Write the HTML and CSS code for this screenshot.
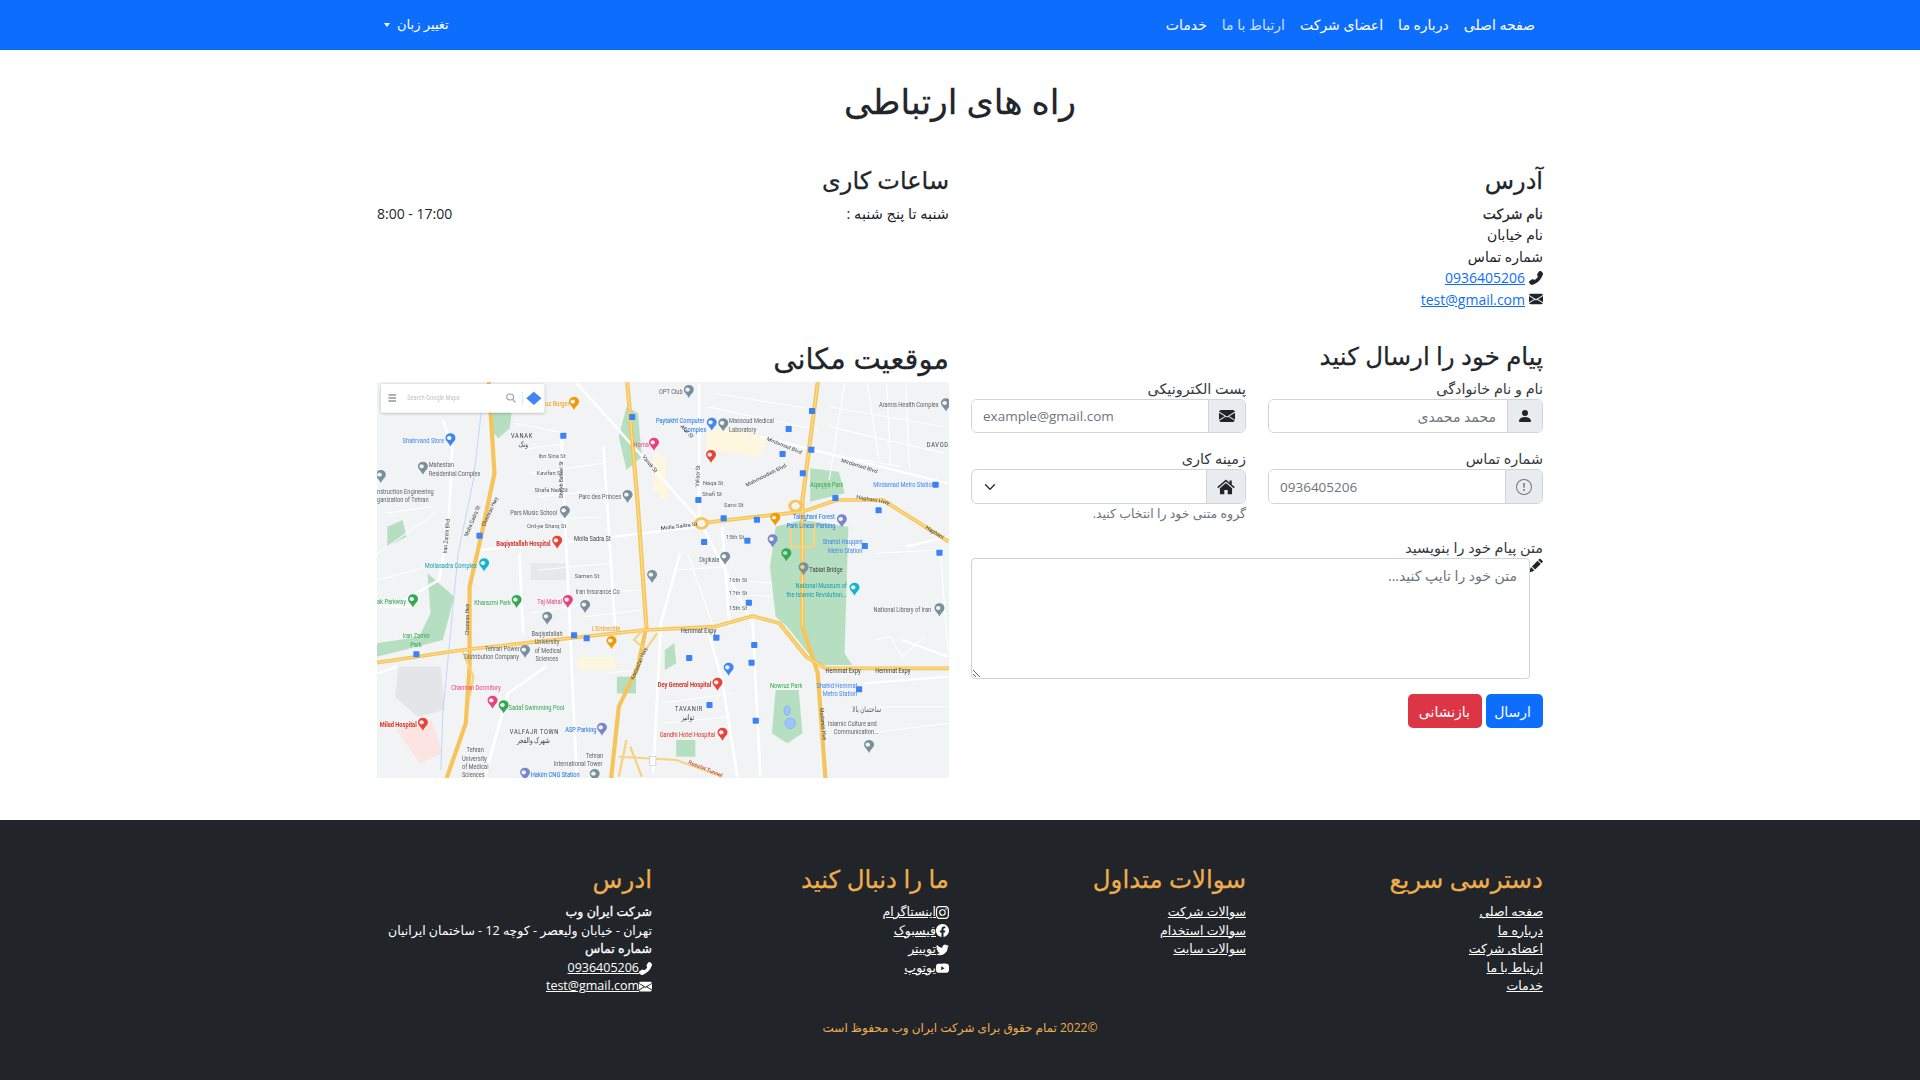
FILE: index.html
```html
<!DOCTYPE html>
<html lang="fa" dir="rtl">
<head>
    <meta charset="UTF-8">
    <title>راه های ارتباطی</title>
    <link rel="stylesheet" href="styles.css">
</head>
<body>
    <header class="topbar">
        <div class="container topbar-in">
            <nav class="nav-links">
                <a href="#">صفحه اصلی</a>
                <a href="#">درباره ما</a>
                <a href="#">اعضای شرکت</a>
                <a href="#" class="active">ارتباط با ما</a>
                <a href="#">خدمات</a>
            </nav>
            <a href="#" class="lang">تغییر زبان<span class="caret"></span></a>
        </div>
    </header>

    <main class="container">
        <h1 class="page-title">راه های ارتباطی</h1>

        <div class="two-cols info-row">
            <section>
                <h3>آدرس</h3>
                <p class="line"><b>نام شرکت</b></p>
                <p class="line">نام خیابان</p>
                <p class="line">شماره تماس</p>
                <p class="line">
                    <svg class="ic" viewBox="0 0 16 16"><path d="M1.885.511a1.745 1.745 0 0 1 2.61.163L6.29 2.98c.329.423.445.974.315 1.494l-.547 2.19a.678.678 0 0 0 .178.643l2.457 2.457a.678.678 0 0 0 .644.178l2.189-.547a1.745 1.745 0 0 1 1.494.315l2.306 1.794c.829.645.905 1.87.163 2.611l-1.034 1.034c-.74.74-1.846 1.065-2.877.702a18.634 18.634 0 0 1-7.01-4.42 18.634 18.634 0 0 1-4.42-7.009c-.362-1.03-.037-2.137.703-2.877L1.885.511z" transform="translate(16 0) scale(-1 1)"/></svg>
                    <a href="#" class="blue">0936405206</a>
                </p>
                <p class="line">
                    <svg class="ic" viewBox="0 0 16 16"><path d="M.05 3.555A2 2 0 0 1 2 2h12a2 2 0 0 1 1.95 1.555L8 8.414.05 3.555zM0 4.697v7.104l5.803-3.558L0 4.697zM6.761 8.83l-6.57 4.027A2 2 0 0 0 2 14h12a2 2 0 0 0 1.808-1.144l-6.57-4.027L8 9.586l-1.239-.757zm3.436-.586L16 11.801V4.697l-5.803 3.546z"/></svg>
                    <a href="#" class="blue">test@gmail.com</a>
                </p>
            </section>
            <section>
                <h3>ساعات کاری</h3>
                <div class="hours">
                    <span>شنبه تا پنج شنبه :</span>
                    <span dir="ltr">8:00 - 17:00</span>
                </div>
            </section>
        </div>

        <div class="two-cols contact-row">
            <section>
                <h3 class="form-title">پیام خود را ارسال کنید</h3>
                <form class="form-grid">
                    <div class="field">
                        <label>نام و نام خانوادگی</label>
                        <div class="input-group">
                            <span class="addon narrow"><svg class="ic-16" viewBox="0 0 16 16"><path d="M3 14s-1 0-1-1 1-4 6-4 6 3 6 4-1 1-1 1H3zm5-6a3 3 0 1 0 0-6 3 3 0 0 0 0 6z"/></svg></span>
                            <input type="text" placeholder="محمد محمدی">
                        </div>
                    </div>
                    <div class="field">
                        <label>پست الکترونیکی</label>
                        <div class="input-group">
                            <span class="addon"><svg class="ic-16" viewBox="0 0 16 16"><path d="M.05 3.555A2 2 0 0 1 2 2h12a2 2 0 0 1 1.95 1.555L8 8.414.05 3.555zM0 4.697v7.104l5.803-3.558L0 4.697zM6.761 8.83l-6.57 4.027A2 2 0 0 0 2 14h12a2 2 0 0 0 1.808-1.144l-6.57-4.027L8 9.586l-1.239-.757zm3.436-.586L16 11.801V4.697l-5.803 3.546z"/></svg></span>
                            <input type="text" dir="ltr" placeholder="example@gmail.com">
                        </div>
                    </div>
                    <div class="field">
                        <label>شماره تماس</label>
                        <div class="input-group tall">
                            <span class="addon"><svg class="ic-16 muted" viewBox="0 0 16 16"><path d="M8 15A7 7 0 1 1 8 1a7 7 0 0 1 0 14zm0 1A8 8 0 1 0 8 0a8 8 0 0 0 0 16z"/><path d="M7.002 11a1 1 0 1 1 2 0 1 1 0 0 1-2 0zM7.1 4.995a.905.905 0 1 1 1.8 0l-.35 3.507a.552.552 0 0 1-1.1 0L7.1 4.995z"/></svg></span>
                            <input type="text" dir="ltr" placeholder="0936405206">
                        </div>
                    </div>
                    <div class="field">
                        <label>زمینه کاری</label>
                        <div class="input-group tall">
                            <span class="addon wide"><svg class="ic-home" viewBox="0 0 16 16"><path d="M8 1.300.2 8l.9 1.100L8 3.200l6.900 5.900.9-1.100-2.700-2.300V2.200h-2v2L8 1.300z"/><path d="M8 4.500 2.600 9.100V14.500h3.900v-3.800h3v3.800h3.900V9.100L8 4.500z"/></svg></span>
                            <div class="select-box"><svg class="chev" viewBox="0 0 16 16"><path fill="none" stroke="#343a40" stroke-width="2" stroke-linecap="round" stroke-linejoin="round" d="m2 5 6 6 6-6"/></svg></div>
                        </div>
                        <small>گروه متنی خود را انتخاب کنید.</small>
                    </div>
                    <div class="field full">
                        <label class="msg-label">متن پیام خود را بنویسید</label>
                        <div class="message-wrap">
                            <svg class="pencil" viewBox="0 0 16 16"><path d="M12.854.146a.5.5 0 0 0-.707 0L10.500 1.793 14.207 5.500l1.647-1.646a.5.5 0 0 0 0-.708l-3-3zm.646 6.061L9.793 2.500 3.293 9H3.500a.5.5 0 0 1 .5.500v.500h.500a.5.500 0 0 1 .5.500v.500h.500a.5.500 0 0 1 .5.500v.500h.500a.5.500 0 0 1 .5.500v.207l6.500-6.500zm-7.468 7.468A.5.500 0 0 1 6 13.500V13h-.500a.5.500 0 0 1-.500-.500V12h-.500a.5.500 0 0 1-.500-.500V11h-.500a.5.500 0 0 1-.500-.500V10h-.500a.499.499 0 0 1-.175-.032l-.179.178a.5.500 0 0 0-.110.168l-2 5a.5.500 0 0 0 .650.650l5-2a.5.500 0 0 0 .168-.110l.178-.178z"/></svg>
                            <textarea placeholder="متن خود را تایپ کنید..."></textarea>
                        </div>
                    </div>
                    <div class="buttons full">
                        <button type="button" class="btn send">ارسال</button>
                        <button type="button" class="btn reset">بازنشانی</button>
                    </div>
                </form>
            </section>
            <section>
                <h3 class="map-title">موقعیت مکانی</h3>
                <svg class="map" viewBox="18 126 1495 1188" preserveAspectRatio="none">
                    <defs>
                        <path id="pin" d="M0-15a13 13 0 0 1 13 13C13 8 5 12 0 24-5 12-13 8-13-2A13 13 0 0 1 0-15zm0 9a6 6 0 1 0 0 10 6 6 0 0 0 0-10z"/>
                        <rect id="stop" x="-8" y="-9" width="16" height="18" rx="2"/>
                    </defs>
                    <rect x="18" y="126" width="1495" height="1188" fill="#f1f3f4"/>
                    <!-- parks -->
                    <g fill="#a8dab5" opacity=".8">
                        <path d="M1060 560 1130 540 1250 560 1240 940 1260 975 1170 975 1090 860 1060 830 1045 680z"/>
                        <path d="M1150 385l75 10 15 65-90 25z"/>
                        <path d="M1060 1050h60l10 130-40 30-40-30z"/>
                        <path d="M670 200l30 20 10 130-40 40-20-100z"/>
                        <path d="M320 215h50l-5 50-30 30-15-20z"/>
                        <path d="M45 560l40-20 10 50-50 30z"/>
                        <path d="M150 700l70 70-30 130-172 50v-40l110-20 30-70z"/>
                        <path d="M645 1010h50v50h-50z"/>
                        <path d="M800 1200h50v50h-50z"/>
                        <path d="M770 930l25-20 5 60-30 20z"/>
                    </g>
                    <path d="M75 980h110l10 130-70 20-60-60z" fill="#e3e5e8"/>
                    <path d="M420 670h95v50h-95z" fill="#e6e8ea"/>
                    <path d="M70 1170l90-30 30 100-60 30z" fill="#fbe4e1"/>
                    <path d="M880 270h90l70 30-20 50-140-20z" fill="#fef7e0"/>
                    <path d="M740 340l30 10 10 140-40-40z" fill="#fef7e0"/>
                    <path d="M540 950h100v40H540z" fill="#fef7e0"/>
                    <!-- minor streets -->
                    <g fill="none" stroke="#fff" stroke-width="3">
                        <path d="M380 250l130 30M390 330l120-20M420 400l190-30M440 470l170-20M440 540l170-10M440 690l190-20M420 820l150-30M530 760l190-10M800 690l130-10M940 720l110 10M930 760l120 10"/>
                        <path d="M880 200l290 70M900 160l270 50M1200 200l300 60M1200 260l300 80M1190 340l200 40M1240 130l-40 290M1300 130l30 230M1350 130l10 240M1400 130l10 260"/>
                        <path d="M560 830l150-20M620 1000l80-10M760 1090l190-30M760 1150l180-20M830 640l70 230M20 640l150-120M20 720l130-40M40 520l120-20"/>
                        <path d="M1320 640l170-10 20 300M1320 900l40-10 30 60 60-60M1300 1180l210-30M1290 1100l220 0"/>
                    </g>
                    <!-- white streets -->
                    <g fill="none" stroke="#fff" stroke-width="7">
                        <path d="M540 130 860 540 1000 850 1020 1310"/>
                        <path d="M860 130 860 540"/>
                        <path d="M610 320 640 860M500 300 540 1310"/>
                        <path d="M280 630 490 610 860 560"/>
                        <path d="M1020 290 1510 430"/>
                        <path d="M390 640 400 880M810 640 760 850 740 1300"/>
                        <path d="M190 240 215 320 205 560 180 720 60 800M920 560 940 860"/>
                        <path d="M1290 1030l220-20M1400 620l110-30M1390 900l120 50"/>
                        <path d="M300 1310 360 1060 460 980M880 860 920 1020 960 1310"/>
                        <path d="M18 800h90M20 1000l50-20"/>
                    </g>
                    <path d="M290 220 270 420 230 640 190 1120 185 1290" fill="none" stroke="#aecbfa" stroke-width="2"/>
                    <!-- highways -->
                    <g fill="none" stroke="#f6c45a" stroke-width="11" stroke-linejoin="round">
                        <path d="M18 968 240 930 540 892 720 870 900 860 1000 828 1070 850 1140 950 1190 985 1513 985"/>
                        <path d="M310 126 325 400 290 590 260 740 260 980 250 1150 200 1314"/>
                        <path d="M672 126 700 500 722 860 700 980 650 1100 630 1314"/>
                        <path d="M1170 126 1130 480 1130 860 1170 1000 1190 1314"/>
                        <path d="M860 550 1010 530 1130 515 1220 480 1340 480 1513 605"/>
                    </g>
                    <g fill="none" stroke="#f8d27f" stroke-width="6">
                        <path d="M720 860 690 900 720 930 750 880M1100 560v60h60v-70M650 1250l150 10 120 50M240 930l30 80-10 60M670 1200l-20 110M680 1220l30 90"/>
                    </g>
                    <g fill="none" stroke="#fde293" stroke-width="3">
                        <path d="M18 968 240 930 540 892 720 870 900 860 1000 828 1070 850 1140 950 1190 985 1513 985"/>
                        <path d="M860 550 1010 530 1130 515 1220 480 1340 480 1513 605"/>
                        <path d="M672 126 700 500 722 860"/>
                        <path d="M1170 126 1130 480 1130 860"/>
                    </g>
                    <circle cx="866" cy="550" r="15" fill="#f1f3f4" stroke="#f6c45a" stroke-width="8"/>
                    <circle cx="1112" cy="498" r="15" fill="#f1f3f4" stroke="#f6c45a" stroke-width="8"/>
                    <g fill="#a1c2fa" stroke="#7baaf7" stroke-width="2"><ellipse cx="1098" cy="1150" rx="14" ry="16"/><ellipse cx="1090" cy="1112" rx="8" ry="14"/></g>
                    <!-- search box -->
                    <rect class="map-search" x="28" y="132" width="428" height="86" rx="6" fill="#fff"/>
                    <path d="M48 165h20M48 174h20M48 183h20" stroke="#5f6368" stroke-width="3"/>
                    <circle cx="366" cy="171" r="9" fill="none" stroke="#9aa0a6" stroke-width="3"/>
                    <path d="M372 178l8 9" stroke="#9aa0a6" stroke-width="3"/>
                    <path d="M428 155l20 20-20 20-20-20z" fill="#4285f4"/>
                    <path d="M398 155v40" stroke="#dadce0" stroke-width="2"/>
                    <!-- pins -->
                    <g fill="#78909c">
                        <use href="#pin" x="833" y="150"/><use href="#pin" x="923" y="250"/><use href="#pin" x="28" y="405"/><use href="#pin" x="138" y="380"/><use href="#pin" x="673" y="465"/><use href="#pin" x="509" y="512"/><use href="#pin" x="928" y="650"/><use href="#pin" x="737" y="705"/><use href="#pin" x="562" y="795"/><use href="#pin" x="463" y="830"/><use href="#pin" x="405" y="930"/><use href="#pin" x="1133" y="682"/><use href="#pin" x="1488" y="805"/><use href="#pin" x="1304" y="1215"/><use href="#pin" x="587" y="1302"/><use href="#pin" x="1505" y="190"/>
                    </g>
                    <g fill="#ea4335">
                        <use href="#pin" x="489" y="602"/><use href="#pin" x="891" y="345"/><use href="#pin" x="908" y="1028"/><use href="#pin" x="921" y="1178"/><use href="#pin" x="138" y="1148"/>
                    </g>
                    <g fill="#ec407a"><use href="#pin" x="742" y="308"/><use href="#pin" x="517" y="780"/><use href="#pin" x="320" y="1082"/></g>
                    <g fill="#34a853"><use href="#pin" x="112" y="778"/><use href="#pin" x="383" y="780"/><use href="#pin" x="349" y="1096"/><use href="#pin" x="1088" y="640"/></g>
                    <g fill="#f29900"><use href="#pin" x="533" y="186"/><use href="#pin" x="631" y="903"/><use href="#pin" x="1059" y="533"/></g>
                    <g fill="#4285f4"><use href="#pin" x="210" y="295"/><use href="#pin" x="893" y="248"/><use href="#pin" x="937" y="983"/></g>
                    <g fill="#7986cb"><use href="#pin" x="1052" y="598"/><use href="#pin" x="1233" y="538"/><use href="#pin" x="606" y="1163"/><use href="#pin" x="405" y="1298"/></g>
                    <g fill="#12b5cb"><use href="#pin" x="298" y="670"/><use href="#pin" x="1266" y="743"/></g>
                    <!-- transit stops -->
                    <g fill="#3b82f6">
                        <use href="#stop" x="685" y="231"/><use href="#stop" x="505" y="287"/><use href="#stop" x="1155" y="213"/><use href="#stop" x="1094" y="267"/><use href="#stop" x="1153" y="329"/><use href="#stop" x="1078" y="342"/><use href="#stop" x="1131" y="400"/><use href="#stop" x="858" y="480"/><use href="#stop" x="924" y="535"/><use href="#stop" x="1011" y="539"/><use href="#stop" x="1216" y="474"/><use href="#stop" x="1329" y="511"/><use href="#stop" x="873" y="606"/><use href="#stop" x="986" y="602"/><use href="#stop" x="286" y="587"/><use href="#stop" x="1488" y="638"/><use href="#stop" x="990" y="788"/><use href="#stop" x="121" y="943"/><use href="#stop" x="533" y="886"/><use href="#stop" x="566" y="895"/><use href="#stop" x="905" y="893"/><use href="#stop" x="1004" y="915"/><use href="#stop" x="834" y="954"/><use href="#stop" x="997" y="968"/><use href="#stop" x="887" y="1095"/><use href="#stop" x="1008" y="1142"/><use href="#stop" x="1478" y="434"/><use href="#stop" x="1293" y="618"/><use href="#stop" x="1278" y="1048"/>
                    </g>
                    <rect x="730" y="1250" width="17" height="27" fill="#fff" stroke="#9aa0a6"/>
                    <!-- labels -->
                    <g class="map-labels">
                        <text x="97" y="181" fill="#bdc1c6">Search Google Maps</text>
                        <text x="458" y="199" fill="#f29900">uz Burger</text>
                        <text x="755" y="163" fill="#5f6368">OPT Club</text>
                        <text x="1330" y="200" fill="#5f6368">Aramis Health Complex</text>
                        <text x="85" y="308" fill="#4285f4">Shahrvand Store</text>
                        <text x="368" y="295" fill="#3c4043" class="ls">VANAK</text>
                        <text x="388" y="320" fill="#3c4043">ونک</text>
                        <text x="747" y="250" fill="#1a73e8">Paytakht Computer</text>
                        <text x="820" y="275" fill="#1a73e8">Complex</text>
                        <text x="938" y="250" fill="#5f6368">Massoud Medical</text>
                        <text x="938" y="275" fill="#5f6368">Laboratory</text>
                        <text x="1455" y="320" fill="#3c4043" class="ls">DAVOD</text>
                        <text x="153" y="381" fill="#5f6368">Mahestan</text>
                        <text x="153" y="407" fill="#5f6368">Residential Complex</text>
                        <text x="688" y="321" fill="#ec407a">Homa</text>
                        <text x="18" y="462" fill="#5f6368">nstruction Engineering</text>
                        <text x="18" y="487" fill="#5f6368">ganization of Tehran</text>
                        <text x="545" y="478" fill="#5f6368">Parc des Princes</text>
                        <text x="1150" y="441" fill="#34a853">Aqaqiya Park</text>
                        <text x="1315" y="440" fill="#4285f4">Mirdamad Metro Station</text>
                        <text x="366" y="525" fill="#5f6368">Pars Music School</text>
                        <text x="1105" y="538" fill="#1a73e8">Taleghani Forest</text>
                        <text x="1088" y="565" fill="#1a73e8">Park Linear Parking</text>
                        <text x="1183" y="612" fill="#4285f4">Shahid Haqqani</text>
                        <text x="1197" y="638" fill="#4285f4">Metro Station</text>
                        <text x="330" y="617" fill="#d93025" font-weight="bold">Baqiyatallah Hospital</text>
                        <text x="533" y="604" fill="#3c4043">Molla Sadra St</text>
                        <text x="860" y="665" fill="#5f6368">Digikala</text>
                        <text x="143" y="684" fill="#129eaf">Mollasadra Complex</text>
                        <text x="1148" y="695" fill="#3c4043">Tabiat Bridge</text>
                        <text x="1112" y="745" fill="#129eaf">National Museum of</text>
                        <text x="1088" y="771" fill="#129eaf">the Islamic Revolution...</text>
                        <text x="537" y="763" fill="#5f6368">Iran Insurance Co</text>
                        <text x="18" y="791" fill="#34a853">ak Parkway</text>
                        <text x="272" y="795" fill="#34a853">Kharazmi Park</text>
                        <text x="437" y="793" fill="#ec407a">Taj Mahal</text>
                        <text x="1316" y="817" fill="#5f6368">National Library of Iran</text>
                        <text x="580" y="873" fill="#f29900">L'Entrecôte</text>
                        <text x="812" y="878" fill="#3c4043">Hemmat Expy</text>
                        <text x="422" y="888" fill="#5f6368">Baqiyatallah</text>
                        <text x="430" y="913" fill="#5f6368">University</text>
                        <text x="430" y="938" fill="#5f6368">of Medical</text>
                        <text x="432" y="963" fill="#5f6368">Sciences</text>
                        <text x="85" y="895" fill="#34a853">Iran Zamin</text>
                        <text x="105" y="920" fill="#34a853">Park</text>
                        <text x="300" y="932" fill="#5f6368">Tehran Power</text>
                        <text x="246" y="956" fill="#5f6368">Distribution Company</text>
                        <text x="1190" y="998" fill="#3c4043">Hemmat Expy</text>
                        <text x="1320" y="998" fill="#3c4043">Hemmat Expy</text>
                        <text x="752" y="1040" fill="#d93025" font-weight="bold">Dey General Hospital</text>
                        <text x="212" y="1051" fill="#ec407a">Chamran Dormitory</text>
                        <text x="1045" y="1043" fill="#34a853">Nowruz Park</text>
                        <text x="1167" y="1044" fill="#4285f4">Shahid Hemmat</text>
                        <text x="1183" y="1067" fill="#4285f4">Metro Station</text>
                        <text x="362" y="1110" fill="#34a853">Sadaf Swimming Pool</text>
                        <text x="797" y="1113" fill="#3c4043" class="ls">TAVANIR</text>
                        <text x="815" y="1140" fill="#3c4043">توانیر</text>
                        <text x="25" y="1162" fill="#d93025" font-weight="bold">Milad Hospital</text>
                        <text x="1197" y="1157" fill="#5f6368">Islamic Culture and</text>
                        <text x="1212" y="1183" fill="#5f6368">Communication...</text>
                        <text x="1260" y="1115" fill="#5f6368">ساختمان بالا</text>
                        <text x="365" y="1183" fill="#3c4043" class="ls">VALFAJR TOWN</text>
                        <text x="385" y="1210" fill="#3c4043">شهرک والفجر</text>
                        <text x="510" y="1177" fill="#1a73e8">ASP Parking</text>
                        <text x="757" y="1192" fill="#d93025">Gandhi Hotel Hospital</text>
                        <text x="252" y="1237" fill="#5f6368">Tehran</text>
                        <text x="240" y="1262" fill="#5f6368">University</text>
                        <text x="240" y="1287" fill="#5f6368">of Medical</text>
                        <text x="240" y="1312" fill="#5f6368">Sciences</text>
                        <text x="564" y="1254" fill="#5f6368">Tehran</text>
                        <text x="480" y="1279" fill="#5f6368">International Tower</text>
                        <text x="420" y="1312" fill="#1a73e8">Hakim CNG Station</text>
                        <g class="small">
                            <text transform="translate(255 590) rotate(-70)" fill="#3c4043">Molla Sadra St</text>
                            <text transform="translate(300 560) rotate(-68)" fill="#3c4043">Chamran Hwy</text>
                            <text transform="translate(200 640) rotate(-85)" fill="#3c4043">Iran Zamin Blvd</text>
                            <text transform="translate(258 885) rotate(-90)" fill="#3c4043">Chamran Hwy</text>
                            <text transform="translate(505 475) rotate(-90)" fill="#3c4043">Sheikh Bahaei St</text>
                            <text transform="translate(860 440) rotate(-88)" fill="#3c4043">Valiasr St</text>
                            <text transform="translate(1035 300) rotate(25)" fill="#3c4043">Mirdamad Blvd</text>
                            <text transform="translate(1230 365) rotate(20)" fill="#3c4043">Mirdamad Blvd</text>
                            <text transform="translate(985 440) rotate(-30)" fill="#3c4043">Mahmoodieh Blvd</text>
                            <text transform="translate(1270 475) rotate(12)" fill="#3c4043">Haghani Hwy</text>
                            <text transform="translate(1450 565) rotate(35)" fill="#3c4043">Haghani</text>
                            <text transform="translate(760 570) rotate(-8)" fill="#3c4043">Molla Sadra St</text>
                            <text transform="translate(690 1020) rotate(-70)" fill="#3c4043">Kordestan Hwy</text>
                            <text transform="translate(1175 1105) rotate(85)" fill="#3c4043">Modarres Hwy</text>
                            <text transform="translate(830 1270) rotate(25)" fill="#b3261e">Resalat Tunnel</text>
                            <text transform="translate(810 260) rotate(50)" fill="#3c4043">Arar St</text>
                            <text transform="translate(710 350) rotate(55)" fill="#3c4043">Vanak St</text>
                            <text x="440" y="355" fill="#5f6368">Ibn Sina St</text>
                            <text x="435" y="405" fill="#5f6368">Kavifan St</text>
                            <text x="430" y="455" fill="#5f6368">Shafa Nea St</text>
                            <text x="410" y="565" fill="#5f6368">Ord-ye Sharq St</text>
                            <text x="535" y="715" fill="#5f6368">Saman St</text>
                            <text x="930" y="597" fill="#5f6368">15th St</text>
                            <text x="938" y="725" fill="#5f6368">16th St</text>
                            <text x="938" y="765" fill="#5f6368">17th St</text>
                            <text x="938" y="810" fill="#5f6368">15th St</text>
                            <text x="870" y="435" fill="#5f6368">Naqa St</text>
                            <text x="868" y="468" fill="#5f6368">Shafi St</text>
                            <text x="925" y="500" fill="#5f6368">Sarvi St</text>
                        </g>
                    </g>
                </svg>
            </section>
        </div>
    </main>

    <footer class="site-footer">
        <div class="container">
            <div class="foot-cols">
                <div class="foot-col">
                    <h4>دسترسی سریع</h4>
                    <a href="#">صفحه اصلی</a>
                    <a href="#">درباره ما</a>
                    <a href="#">اعضای شرکت</a>
                    <a href="#">ارتباط با ما</a>
                    <a href="#">خدمات</a>
                </div>
                <div class="foot-col">
                    <h4>سوالات متداول</h4>
                    <a href="#">سوالات شرکت</a>
                    <a href="#">سوالات استخدام</a>
                    <a href="#">سوالات سایت</a>
                </div>
                <div class="foot-col">
                    <h4>ما را دنبال کنید</h4>
                    <div class="social"><svg class="ic-foot" viewBox="0 0 16 16"><path d="M8 0C5.829 0 5.556.01 4.703.048 3.850.088 3.269.222 2.760.420a3.917 3.917 0 0 0-1.417.923A3.927 3.927 0 0 0 .420 2.760C.222 3.268.087 3.850.048 4.700.010 5.555 0 5.827 0 8.001c0 2.172.010 2.444.048 3.297.040.852.174 1.433.372 1.942.205.526.478.972.923 1.417.444.445.890.719 1.416.923.510.198 1.090.333 1.942.372C5.555 15.990 5.827 16 8 16s2.444-.010 3.298-.048c.851-.040 1.434-.174 1.943-.372a3.916 3.916 0 0 0 1.416-.923c.445-.445.718-.891.923-1.417.197-.509.332-1.090.372-1.942C15.990 10.445 16 10.173 16 8s-.010-2.445-.048-3.299c-.040-.851-.175-1.433-.372-1.941a3.926 3.926 0 0 0-.923-1.417A3.911 3.911 0 0 0 13.240.420c-.510-.198-1.092-.333-1.943-.372C10.443.010 10.172 0 7.998 0H8zm-.717 1.442h.718c2.136 0 2.389.007 3.232.046.780.035 1.204.166 1.486.275.373.145.640.319.920.599.280.280.453.546.598.920.110.281.240.705.275 1.485.039.843.047 1.096.047 3.231s-.008 2.389-.047 3.232c-.035.780-.166 1.203-.275 1.485a2.470 2.470 0 0 1-.599.919c-.280.280-.546.453-.920.598-.280.110-.704.240-1.485.276-.843.038-1.096.047-3.232.047s-2.390-.009-3.233-.047c-.780-.036-1.203-.166-1.485-.276a2.478 2.478 0 0 1-.920-.598 2.480 2.480 0 0 1-.600-.920c-.109-.281-.240-.705-.275-1.485-.038-.843-.046-1.096-.046-3.233 0-2.136.008-2.388.046-3.231.036-.780.166-1.204.276-1.486.145-.373.319-.640.599-.920.280-.280.546-.453.920-.598.282-.110.705-.240 1.485-.276.738-.034 1.024-.044 2.515-.045v.002zm4.988 1.328a.960.960 0 1 0 0 1.920.960.960 0 0 0 0-1.920zm-4.270 1.122a4.109 4.109 0 1 0 0 8.217 4.109 4.109 0 0 0 0-8.217zm0 1.441a2.667 2.667 0 1 1 0 5.334 2.667 2.667 0 0 1 0-5.334z"/></svg><a href="#">اینستاگرام</a></div>
                    <div class="social"><svg class="ic-foot" viewBox="0 0 16 16"><path d="M16 8.049c0-4.446-3.582-8.050-8-8.050C3.580 0-.002 3.603-.002 8.050c0 4.017 2.926 7.347 6.750 7.951v-5.625h-2.030V8.050H6.750V6.275c0-2.017 1.195-3.131 3.022-3.131.876 0 1.791.157 1.791.157v1.980h-1.009c-.993 0-1.303.621-1.303 1.258v1.510h2.218l-.354 2.326H9.250V16c3.824-.604 6.750-3.934 6.750-7.951z"/></svg><a href="#">فیسبوک</a></div>
                    <div class="social"><svg class="ic-foot" viewBox="0 0 16 16"><path d="M5.026 15c6.038 0 9.341-5.003 9.341-9.334 0-.140 0-.282-.006-.422A6.685 6.685 0 0 0 16 3.542a6.658 6.658 0 0 1-1.889.518 3.301 3.301 0 0 0 1.447-1.817 6.533 6.533 0 0 1-2.087.793A3.286 3.286 0 0 0 7.875 6.030a9.325 9.325 0 0 1-6.767-3.429 3.289 3.289 0 0 0 1.018 4.382A3.323 3.323 0 0 1 .640 6.575v.045a3.288 3.288 0 0 0 2.632 3.218 3.203 3.203 0 0 1-.865.115 3.230 3.230 0 0 1-.614-.057 3.283 3.283 0 0 0 3.067 2.277A6.588 6.588 0 0 1 .780 13.580a6.320 6.320 0 0 1-.780-.045A9.344 9.344 0 0 0 5.026 15z"/></svg><a href="#">توییتر</a></div>
                    <div class="social"><svg class="ic-foot" viewBox="0 0 16 16"><path d="M8.051 1.999h.089c.822.003 4.987.033 6.110.335a2.010 2.010 0 0 1 1.415 1.420c.101.380.172.883.220 1.402l.010.104.022.260.008.104c.065.914.073 1.770.074 1.957v.075c-.001.194-.010 1.108-.082 2.060l-.008.105-.009.104c-.050.572-.124 1.140-.235 1.558a2.007 2.007 0 0 1-1.415 1.420c-1.160.312-5.569.334-6.180.335h-.142c-.309 0-1.587-.006-2.927-.052l-.170-.006-.087-.004-.171-.007-.171-.007c-1.110-.049-2.167-.128-2.654-.260a2.007 2.007 0 0 1-1.415-1.419c-.111-.417-.185-.986-.235-1.558L.090 9.820l-.008-.104A31.400 31.400 0 0 1 0 7.680v-.123c.002-.215.010-.958.064-1.778l.007-.103.003-.052.008-.104.022-.260.010-.104c.048-.519.119-1.023.220-1.402a2.007 2.007 0 0 1 1.415-1.420c.487-.130 1.544-.210 2.654-.260l.170-.007.172-.006.086-.003.171-.007A99.788 99.788 0 0 1 7.858 2h.193zM6.400 5.209v4.818l4.157-2.408L6.400 5.209z"/></svg><a href="#">یوتوپ</a></div>
                </div>
                <div class="foot-col">
                    <h4>ادرس</h4>
                    <b>شرکت ایران وب</b>
                    <span>تهران - خیابان ولیعصر - کوچه 12 - ساختمان ایرانیان</span>
                    <b>شماره تماس</b>
                    <div class="social"><svg class="ic-foot" viewBox="0 0 16 16"><path d="M1.885.511a1.745 1.745 0 0 1 2.610.163L6.290 2.980c.329.423.445.974.315 1.494l-.547 2.190a.678.678 0 0 0 .178.643l2.457 2.457a.678.678 0 0 0 .644.178l2.189-.547a1.745 1.745 0 0 1 1.494.315l2.306 1.794c.829.645.905 1.870.163 2.611l-1.034 1.034c-.740.740-1.846 1.065-2.877.702a18.634 18.634 0 0 1-7.010-4.420 18.634 18.634 0 0 1-4.420-7.009c-.362-1.030-.037-2.137.703-2.877L1.885.511z" transform="translate(16 0) scale(-1 1)"/></svg><a href="#">0936405206</a></div>
                    <div class="social"><svg class="ic-foot" viewBox="0 0 16 16"><path d="M.05 3.555A2 2 0 0 1 2 2h12a2 2 0 0 1 1.950 1.555L8 8.414.050 3.555zM0 4.697v7.104l5.803-3.558L0 4.697zM6.761 8.830l-6.570 4.027A2 2 0 0 0 2 14h12a2 2 0 0 0 1.808-1.144l-6.570-4.027L8 9.586l-1.239-.756zm3.436-.586L16 11.801V4.697l-5.803 3.547z"/></svg><a href="#">test@gmail.com</a></div>
                </div>
            </div>
            <p class="copyright">©2022 تمام حقوق برای شرکت ایران وب محفوظ است</p>
        </div>
    </footer>
</body>
</html>
```

FILE: styles.css
```css
* {
    box-sizing: border-box;
}
body {
    margin: 0;
    font-family: "Open Sans", "DejaVu Sans", sans-serif;
    font-size: 14px;
    line-height: 21.5px;
    color: #212529;
    background-color: #fff;
}
b {
    font-weight: normal;
    -webkit-text-stroke: .3px currentColor;
}
.container {
    width: 1190px;
    margin: 0 auto;
    padding: 0 12px;
}

/* Navbar */
.topbar {
    height: 50px;
    background-color: #0d6efd;
}
.topbar-in {
    height: 50px;
    display: flex;
    align-items: center;
    justify-content: space-between;
}
.nav-links {
    display: flex;
    gap: 15px;
    padding-right: 8px;
}
.nav-links a {
    color: #fff;
    text-decoration: none;
    font-size: 14px;
}
.nav-links a.active {
    color: rgba(255, 255, 255, .8);
}
.lang {
    color: #fff;
    text-decoration: none;
    font-size: 13px;
    display: flex;
    align-items: center;
    gap: 7px;
    margin-left: 7px;
}
.caret {
    border-top: 4px solid #fff;
    border-left: 3px solid transparent;
    border-right: 3px solid transparent;
}

/* Headings */
.page-title {
    margin: 0;
    padding-top: 28px;
    height: 115px;
    text-align: center;
    font-size: 34.7px;
    line-height: 46px;
    font-weight: normal;
    -webkit-text-stroke: .3px currentColor;
}
h3 {
    margin: 0 0 7.5px;
    font-size: 24px;
    line-height: 30px;
    font-weight: normal;
    -webkit-text-stroke: .25px currentColor;
}
.two-cols {
    display: grid;
    grid-template-columns: 1fr 1fr;
    column-gap: 22px;
}
.info-row {
    height: 176px;
}
.line {
    margin: 0;
    display: flex;
    gap: 4px;
    align-items: center;
}
.ic {
    width: 14px;
    height: 14px;
    fill: #212529;
}
.blue {
    color: #0d6efd;
}
.hours {
    display: flex;
    justify-content: space-between;
}
.hours span:first-child {
    font-size: 14.5px;
}

/* Form */
h3.form-title {
    margin-bottom: 7px;
    font-size: 24.5px;
}
.form-grid {
    display: grid;
    grid-template-columns: 275px 275px;
    column-gap: 22px;
}
.field {
    margin-bottom: 15px;
}
.field.full,
.buttons.full {
    grid-column: 1 / 3;
}
label {
    display: block;
    font-size: 14.4px;
    line-height: 21px;
    color: #343a40;
}
.input-group {
    display: flex;
    height: 34px;
    border: 1px solid #ced4da;
    border-radius: 6px;
    overflow: hidden;
}
.input-group.tall {
    height: 35px;
}
.addon {
    width: 37px;
    flex: none;
    background-color: #e9ecef;
    border-left: 1px solid #ced4da;
    display: flex;
    align-items: center;
    justify-content: center;
}
.addon.narrow {
    width: 35px;
}
.addon.wide {
    width: 39px;
}
.ic-16 {
    width: 16px;
    height: 16px;
    fill: #212529;
}
.ic-16.muted {
    fill: #6c757d;
}
.ic-home {
    width: 18px;
    height: 18px;
    fill: #212529;
}
input {
    flex: 1;
    min-width: 0;
    border: none;
    padding: 0 11px;
    font-family: inherit;
    font-size: 14px;
    outline: none;
}
input[dir="ltr"] {
    text-align: left;
    font-size: 13.5px;
}
input::placeholder,
textarea::placeholder {
    color: #6c757d;
}
.select-box {
    flex: 1;
    display: flex;
    align-items: center;
    padding-left: 12px;
    justify-content: flex-end;
}
.chev {
    width: 12px;
    height: 12px;
}
small {
    display: block;
    margin-bottom: -2px;
    font-size: 12.5px;
    line-height: 20px;
    color: #6c757d;
}
.message-wrap {
    display: flex;
    align-items: flex-start;
}
.pencil {
    width: 14px;
    height: 15px;
    flex: none;
    margin-left: -1px;
    fill: #212529;
}
textarea {
    display: block;
    width: 559px;
    height: 121px;
    border: 1px solid #ced4da;
    border-radius: 4px;
    padding: 7px 12px;
    font-family: inherit;
    font-size: 14px;
    outline: none;
}
.buttons {
    display: flex;
    gap: 4px;
}
.btn {
    height: 34px;
    padding: 0 12px;
    color: #fff;
    border: none;
    border-radius: 5px;
    font-family: inherit;
    font-size: 14px;
}
.btn.send {
    width: 57px;
    background-color: #0d6efd;
}
.btn.reset {
    width: 74px;
    background-color: #dc3545;
}

/* Map */
h3.map-title {
    margin-bottom: 7px;
    font-size: 29px;
    line-height: 34px;
}
.map {
    display: block;
    width: 572px;
    height: 396px;
    filter: blur(.4px);
}
.map-search {
    filter: drop-shadow(0 2px 4px rgba(0, 0, 0, .25));
}
.map-labels text {
    direction: ltr;
    font-family: "Roboto", "DejaVu Sans", sans-serif;
    font-size: 24px;
}
/* the labels in the shot are narrower than Roboto, squeeze them from their left end */
.map-labels > text {
    transform-box: fill-box;
    transform-origin: left center;
    transform: scaleX(.62);
}
.map-labels .small text {
    font-size: 15px;
}
.map-labels text.ls {
    letter-spacing: 3px;
}

/* Footer */
.site-footer {
    margin-top: 42px;
    height: 260px;
    background-color: #212529;
    color: #fff;
    font-size: 12.5px;
    line-height: 18.6px;
    padding-top: 44px;
}
.foot-cols {
    display: grid;
    grid-template-columns: repeat(4, 1fr);
    column-gap: 22px;
}
.foot-col {
    display: flex;
    flex-direction: column;
    align-items: flex-start;
}
.foot-col h4 {
    margin: 0 0 9px;
    font-size: 24.5px;
    line-height: 30px;
    font-weight: normal;
    -webkit-text-stroke: .25px currentColor;
    color: #f0ad4e;
}
.foot-col a {
    color: #fff;
}
.foot-col span {
    white-space: nowrap;
}
.social {
    display: flex;
    align-items: center;
}
.ic-foot {
    width: 13px;
    height: 13px;
    fill: #fff;
}
.copyright {
    margin: 23px 0 0;
    text-align: center;
    font-size: 12px;
    color: #f0ad4e;
}
```
